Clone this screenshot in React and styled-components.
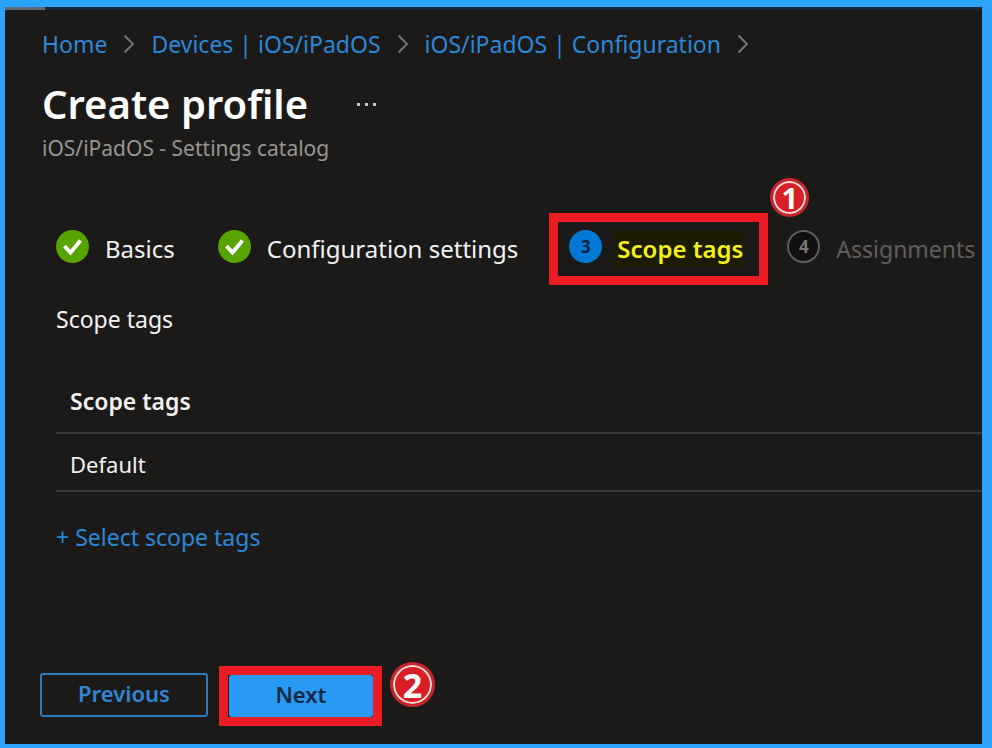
import React from "react";
import styled, { createGlobalStyle } from "styled-components";

const GlobalStyle = createGlobalStyle`
  *, *::before, *::after { box-sizing: border-box; }
  body {
    margin: 0;
    background: #1b1a19;
    font-family: "Noto Sans", "Open Sans", sans-serif;
    font-size: 23px;
    line-height: 32px;
    color: #f3f2f1;
  }
`;

const Frame = styled.div`
  display: flex;
  flex-direction: column;
  min-height: 100vh;
  overflow: hidden;
  background: #1b1a19;
  border: solid #2ba3ff;
  border-width: 7px 10px 4px 5px;
`;

const TopStrip = styled.div`
  width: 40px;
  height: 3px;
  background: #5f6a72;
`;

const TopLine = styled.div`
  height: 3px;
  background: #172a38;
`;

const Header = styled.header`
  padding: 18px 0 0 37px;
`;

const Breadcrumb = styled.ol`
  display: flex;
  align-items: center;
  gap: 16px;
  margin: 0;
  padding: 0;
  list-style: none;
  white-space: nowrap;
`;

const Crumb = styled.li`
  display: flex;
  align-items: center;
  gap: 16px;
`;

const CrumbLink = styled.a`
  color: #2b88d8;
  text-decoration: none;
`;

const TitleRow = styled.div`
  display: flex;
  align-items: center;
  gap: 44px;
  margin-top: 20px;
`;

const Title = styled.h1`
  margin: 0;
  font-size: 40px;
  font-weight: 600;
  line-height: 48px;
  color: #ffffff;
`;

const MoreButton = styled.button`
  display: flex;
  padding: 4px;
  border: 0;
  background: none;
  color: #c8c6c4;
`;

const Subtitle = styled.p`
  margin: 6px 0 0;
  font-size: 21px;
  line-height: 28px;
  color: #979593;
`;

const Steps = styled.ol`
  display: flex;
  align-items: center;
  margin: 51px 0 0;
  padding: 0 0 0 51px;
  list-style: none;
  font-size: 24px;
  white-space: nowrap;
`;

const Step = styled.li`
  position: relative;
  display: flex;
  align-items: center;
  gap: ${(p) => (p.$current ? 11 : 16)}px;
  height: 72px;
  margin-right: ${(p) => p.$after || 0}px;
  padding: ${(p) => (p.$current ? "0 16px 0 11px" : "0")};
  border: ${(p) => (p.$current ? "9px solid #ec1c24" : "0")};
  color: ${(p) => (p.$disabled ? "#605e5c" : "#f3f2f1")};
  font-size: ${(p) => (p.$disabled ? 23 : 24)}px;
`;

const StepMark = styled.span`
  display: flex;
  flex: none;
  align-items: center;
  justify-content: center;
  width: 33px;
  height: 33px;
  margin-bottom: 5px;
  border-radius: 50%;
  border: ${(p) => (p.$kind === "todo" ? "2px solid #605e5c" : "0")};
  background: ${(p) =>
    ({ done: "#57a300", current: "#0078d4", todo: "#11100f" })[p.$kind]};
  color: ${(p) => (p.$kind === "current" ? "#0b2540" : "#797775")};
  font-size: 17px;
  font-weight: 700;
  line-height: 20px;
`;

const StepLabel = styled.span`
  ${(p) =>
    p.$current &&
    `
    padding: 2px 0 2px 4px;
    background: #1c1b00;
    color: #f5f015;
    font-weight: 600;
  `}
`;

const Badge = styled.span`
  display: flex;
  flex: none;
  align-items: center;
  justify-content: center;
  width: ${(p) => p.$size}px;
  height: ${(p) => p.$size}px;
  border-radius: 50%;
  border: 3px solid #c4262c;
  background: #d91f26;
  box-shadow: inset 0 0 0 2px #f8dcdd;
  color: #ffffff;
  font-family: "Open Sans", "Noto Sans", sans-serif;
  font-size: ${(p) => (p.$size > 40 ? 34 : 29)}px;
  font-weight: 700;
  line-height: 1;
`;

const CornerBadge = styled(Badge)`
  position: absolute;
  top: -44px;
  right: -50px;
`;

const Content = styled.main`
  padding-left: 51px;
`;

const Intro = styled.p`
  margin: 18px 0 34px;
`;

const TagTable = styled.table`
  width: 100%;
  border-collapse: collapse;
  text-align: left;

  th, td {
    padding: 0 14px;
    border-bottom: 2px solid #3b3a39;
  }
  th { height: 64px; font-weight: 600; }
  td { height: 58px; padding-top: 4px; font-size: 22px; }
`;

const SelectLink = styled.a`
  display: inline-block;
  margin-top: 29px;
  color: #2b88d8;
  text-decoration: none;
`;

const Footer = styled.footer`
  display: flex;
  align-items: flex-start;
  margin-top: auto;
  padding: 0 0 18px 35px;
`;

const ActionButton = styled.button`
  height: ${(p) => (p.$primary ? 42 : 44)}px;
  width: ${(p) => (p.$primary ? 144 : 168)}px;
  margin-top: ${(p) => (p.$primary ? 0 : 7)}px;
  padding: 0 0 4px;
  border: ${(p) => (p.$primary ? "0" : "2px solid #2b7bbd")};
  border-radius: 3px;
  background: ${(p) => (p.$primary ? "#2899f5" : "transparent")};
  color: ${(p) => (p.$primary ? "#14293d" : "#2f86d6")};
  font: 600 22px/32px "Noto Sans", "Open Sans", sans-serif;
`;

const Callout = styled.div`
  display: flex;
  margin: 0 8px 0 11px;
  padding-left: 1px;
  border: 9px solid #ec1c24;
`;

const RaisedBadge = styled(Badge)`
  margin-top: -4px;
`;

function Check() {
  return (
    <svg width="33" height="33" viewBox="0 0 33 33" fill="none" aria-hidden="true">
      <path d="M8.5 16 L14.5 22.5 L24.5 10.5" stroke="#fff" strokeWidth="3.8" />
    </svg>
  );
}

function Chevron() {
  return (
    <svg width="12" height="20" viewBox="0 0 12 20" fill="none" aria-hidden="true">
      <path d="M1.5 1.5 L10 10 L1.5 18.5" stroke="#797775" strokeWidth="1.8" />
    </svg>
  );
}

const crumbs = ["Home", "Devices | iOS/iPadOS", "iOS/iPadOS | Configuration"];

export default function App() {
  return (
    <>
      <GlobalStyle />
      <Frame>
        <TopLine>
          <TopStrip />
        </TopLine>
        <Header>
          <nav aria-label="Breadcrumb">
            <Breadcrumb>
              {crumbs.map((name) => (
                <Crumb key={name}>
                  <CrumbLink href="#">{name}</CrumbLink>
                  <Chevron />
                </Crumb>
              ))}
            </Breadcrumb>
          </nav>
          <TitleRow>
            <Title>Create profile</Title>
            <MoreButton type="button" aria-label="More">
              <svg width="22" height="4" viewBox="0 0 22 4" fill="currentColor" aria-hidden="true">
                <rect x="1" y="1" width="3" height="3" />
                <rect x="9" y="1" width="3" height="3" />
                <rect x="17" y="1" width="3" height="3" />
              </svg>
            </MoreButton>
          </TitleRow>
          <Subtitle>iOS/iPadOS - Settings catalog</Subtitle>
        </Header>
        <Steps>
          <Step $after={43}>
            <StepMark $kind="done"><Check /></StepMark>
            <StepLabel>Basics</StepLabel>
          </Step>
          <Step $after={31}>
            <StepMark $kind="done"><Check /></StepMark>
            <StepLabel>Configuration settings</StepLabel>
          </Step>
          <Step $current $after={19} aria-current="step">
            <StepMark $kind="current">3</StepMark>
            <StepLabel $current>Scope tags</StepLabel>
            <CornerBadge $size={39}>1</CornerBadge>
          </Step>
          <Step $disabled>
            <StepMark $kind="todo">4</StepMark>
            <StepLabel>Assignments</StepLabel>
          </Step>
        </Steps>
        <Content>
          <Intro>Scope tags</Intro>
          <TagTable>
            <thead>
              <tr><th scope="col">Scope tags</th></tr>
            </thead>
            <tbody>
              <tr><td>Default</td></tr>
            </tbody>
          </TagTable>
          <SelectLink href="#">+ Select scope tags</SelectLink>
        </Content>
        <Footer>
          <ActionButton type="button">Previous</ActionButton>
          <Callout>
            <ActionButton type="button" $primary>Next</ActionButton>
          </Callout>
          <RaisedBadge $size={45}>2</RaisedBadge>
        </Footer>
      </Frame>
    </>
  );
}
